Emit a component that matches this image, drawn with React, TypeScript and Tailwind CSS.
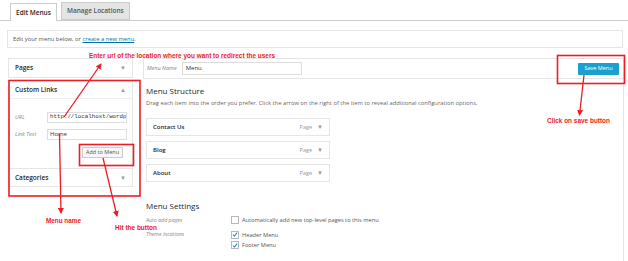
import React from "react";

const Caret = ({ up = false }: { up?: boolean }) => (
  <span className="text-[6px] leading-none text-[#9a9a9a]">{up ? "▲" : "▼"}</span>
);

function Check({ checked }: { checked?: boolean }) {
  return (
    <span className="w-[8px] h-[8px] border border-[#b4b9be] bg-white flex items-center justify-center shrink-0">
      {checked && (
        <svg width="7" height="7" viewBox="0 0 10 10">
          <path d="M1.5 5.2 L4 7.6 L8.6 2" fill="none" stroke="#1e8cbe" strokeWidth="1.8" />
        </svg>
      )}
    </span>
  );
}

function MenuItem({ label }: { label: string }) {
  return (
    <div className="w-[184px] h-[18px] border border-[#e5e5e5] bg-white flex items-center justify-between pl-[6px] pr-[6px]">
      <span className="text-[6px] font-semibold text-[#23282d]">{label}</span>
      <span className="flex items-center gap-[5px] text-[5.5px] text-[#999]">
        Page <Caret />
      </span>
    </div>
  );
}

function Annotations() {
  const red = "#ee1c25";
  return (
    <svg className="absolute inset-0 pointer-events-none" width="628" height="261">
      <defs>
        <marker id="ah" markerWidth="6" markerHeight="6" refX="5" refY="3" orient="auto" markerUnits="userSpaceOnUse">
          <path d="M0 0 L6 3 L0 6 Z" fill={red} />
        </marker>
      </defs>
      <rect x="9" y="80.5" width="131" height="115.5" fill="none" stroke={red} strokeWidth="1.6" />
      <rect x="79.5" y="144.5" width="54" height="21" fill="none" stroke={red} strokeWidth="1.6" />
      <rect x="557.5" y="55.5" width="67" height="28" fill="none" stroke={red} strokeWidth="1.6" />
      <line x1="64" y1="117" x2="101" y2="64" stroke={red} strokeWidth="1.3" markerEnd="url(#ah)" />
      <line x1="59.5" y1="134" x2="61" y2="213" stroke={red} strokeWidth="1.3" markerEnd="url(#ah)" />
      <line x1="103" y1="158" x2="117" y2="216" stroke={red} strokeWidth="1.3" markerEnd="url(#ah)" />
      <line x1="584" y1="75" x2="579.5" y2="115" stroke={red} strokeWidth="1.3" markerEnd="url(#ah)" />
      <g fill={red} fontFamily="'Liberation Sans', Arial, sans-serif" fontWeight="700" fontSize="6.5">
        <text x="89" y="58" textLength="186" lengthAdjust="spacingAndGlyphs">
          Enter url of the location where you want to redirect the users
        </text>
        <text x="46" y="223" textLength="35" lengthAdjust="spacingAndGlyphs">Menu name</text>
        <text x="115" y="229.5" textLength="42" lengthAdjust="spacingAndGlyphs">Hit the button</text>
        <text x="547" y="122.5" textLength="63" lengthAdjust="spacingAndGlyphs">Click on save button</text>
      </g>
    </svg>
  );
}

export default function App() {
  return (
    <div className="relative w-[628px] h-[261px] overflow-hidden bg-white font-['Open_Sans',sans-serif] text-[#444]">
      {/* tabs */}
      <div className="h-[21px] pt-[3px] pl-[10px] flex items-end gap-[4px] border-b border-[#ccc]">
        <div className="h-[18px] px-[5px] flex items-center border border-b-0 border-[#ccc] bg-white text-[6.5px] font-semibold text-[#23282d] -mb-px">
          Edit Menus
        </div>
        <div className="h-[18px] px-[5px] flex items-center border border-[#ccc] bg-[#e4e4e4] text-[6.5px] font-semibold text-[#555]">
          Manage Locations
        </div>
      </div>

      {/* info */}
      <div className="ml-[7px] mr-[5px] mt-[9px] h-[18px] border border-[#e5e5e5] bg-white flex items-center pl-[5px] text-[5.8px] text-[#555]">
        Edit your menu below, or&nbsp;<span className="text-[#0073aa] underline">create a new menu</span>.
      </div>

      <div className="flex mt-[10px] pl-[8px] gap-[10px]">
        {/* left column */}
        <div className="w-[125px] flex flex-col">
          <div className="h-[20px] border border-[#e5e5e5] bg-white flex items-center justify-between px-[6px]">
            <span className="text-[6.5px] font-semibold text-[#23282d]">Pages</span>
            <Caret />
          </div>
          <div className="mt-[2px] border border-[#e5e5e5] bg-white">
            <div className="h-[18px] flex items-center justify-between px-[6px] border-b border-[#eee]">
              <span className="text-[6.5px] font-semibold text-[#23282d]">Custom Links</span>
              <Caret up />
            </div>
            <div className="pt-[13px] pb-[10px] flex flex-col">
              <div className="flex items-center h-[11px]">
                <span className="w-[38px] pl-[6px] text-[5.5px] italic text-[#888]">URL</span>
                <div className="w-[80px] h-[11px] border border-[#ddd] flex items-center px-[2px] font-['Liberation_Mono',monospace] text-[5.8px] text-[#333] overflow-hidden whitespace-nowrap">
                  http://localhost/wordp
                </div>
              </div>
              <div className="flex items-center h-[11px] mt-[6px]">
                <span className="w-[38px] pl-[6px] text-[5.5px] italic text-[#888]">Link Text</span>
                <div className="w-[80px] h-[11px] border border-[#ddd] flex items-center px-[2px] text-[6px] text-[#333]">
                  Home
                </div>
              </div>
              <div className="flex justify-end mt-[7px] pr-[9px]">
                <div className="w-[41px] h-[11px] border border-[#ccc] bg-[#f7f7f7] flex items-center justify-center text-[5.5px] text-[#555]">
                  Add to Menu
                </div>
              </div>
            </div>
          </div>
          <div className="h-[18px] border border-t-0 border-[#e5e5e5] bg-white flex items-center justify-between px-[6px]">
            <span className="text-[6.5px] font-semibold text-[#23282d]">Categories</span>
            <Caret />
          </div>
        </div>

        {/* right column */}
        <div className="w-[481px] flex flex-col border-r border-[#e5e5e5] h-[205px]">
          <div className="h-[21px] border border-r-0 border-[#e5e5e5] bg-white flex items-center justify-between pl-[3px] pr-[4px]">
            <div className="flex items-center gap-[5px]">
              <span className="text-[5.5px] italic text-[#888]">Menu Name</span>
              <div className="w-[120px] h-[13px] border border-[#ddd] flex items-center px-[3px] text-[6px] text-[#333]">
                Menu
              </div>
            </div>
            <div className="w-[41px] h-[12px] bg-[#1aa0d0] rounded-[1px] flex items-center justify-center text-[5.5px] text-white">
              Save Menu
            </div>
          </div>
          <div className="pl-[3px] pt-[6px] flex flex-col">
            <div className="text-[8px] font-medium text-[#23282d] leading-[12px]">Menu Structure</div>
            <div className="mt-[2px] text-[5.8px] text-[#666] leading-[8px] whitespace-nowrap">
              Drag each item into the order you prefer. Click the arrow on the right of the item to reveal additional configuration options.
            </div>
            <div className="mt-[11px] flex flex-col gap-[5px]">
              <MenuItem label="Contact Us" />
              <MenuItem label="Blog" />
              <MenuItem label="About" />
            </div>
            <div className="mt-[18px] text-[8px] font-medium text-[#23282d] leading-[12px]">Menu Settings</div>
            <div className="mt-[5px] flex">
              <div className="w-[85px] flex flex-col text-[5.3px] italic text-[#888] leading-[7px]">
                <span>Auto add pages</span>
                <span className="mt-[7px]">Theme locations</span>
              </div>
              <div className="flex flex-col text-[5.7px] text-[#555]">
                <div className="flex items-center gap-[3px] -mt-[1px]">
                  <Check /> Automatically add new top-level pages to this menu
                </div>
                <div className="flex items-center gap-[3px] mt-[6px]">
                  <Check checked /> Header Menu
                </div>
                <div className="flex items-center gap-[3px] mt-[2px]">
                  <Check checked /> Footer Menu
                </div>
              </div>
            </div>
          </div>
        </div>
      </div>

      <Annotations />
    </div>
  );
}
